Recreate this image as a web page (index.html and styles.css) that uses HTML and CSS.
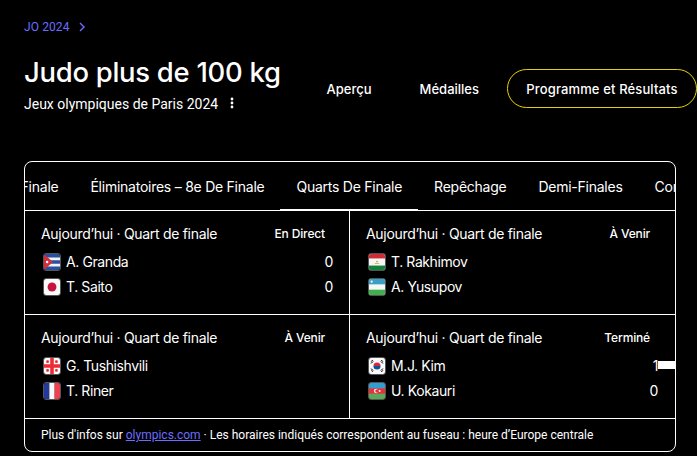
FILE: index.html
```html
<!DOCTYPE html>
<html lang="fr">
<head>
<meta charset="utf-8">
<title>Judo plus de 100 kg</title>
<link rel="stylesheet" href="styles.css">
</head>
<body>
<header class="head">
  <div class="head-left">
    <nav class="crumb"><a class="crumb-link">JO 2024</a>
      <svg class="crumb-chev" width="8" height="10" viewBox="0 0 8 10"><path d="M2 1l4 4-4 4" fill="none" stroke="#6c6cff" stroke-width="1.4"/></svg>
    </nav>
    <h1 class="title">Judo plus de 100 kg</h1>
    <div class="sub"><span>Jeux olympiques de Paris 2024</span>
      <svg class="dots" width="4" height="12" viewBox="0 0 4 12"><circle cx="2" cy="2" r="1.4"/><circle cx="2" cy="6" r="1.4"/><circle cx="2" cy="10" r="1.4"/></svg>
    </div>
  </div>
  <nav class="views">
    <a class="view">Aperçu</a>
    <a class="view">Médailles</a>
    <a class="view view-on">Programme et Résultats</a>
  </nav>
</header>

<section class="card">
  <div class="tabs">
    <a class="tab tab-first">Demi Finale</a>
    <a class="tab">Éliminatoires – 8e De Finale</a>
    <a class="tab tab-on">Quarts De Finale</a>
    <a class="tab">Repêchage</a>
    <a class="tab">Demi-Finales</a>
    <a class="tab">Combats</a>
  </div>
  <div class="grid">
    <article class="match">
      <div class="match-head"><span>Aujourd’hui · Quart de finale</span><span class="status">En Direct</span></div>
      <div class="row"><svg class="flag" viewBox="0 0 18 18"><rect width="18" height="18" fill="#2a4f9e"/><path d="M0 4h18v3H0zM0 11h18v3H0z" fill="#f2f2f2"/><path d="M0 0l10 9-10 9z" fill="#cf2e3c"/><circle cx="3.5" cy="9" r="1.4" fill="#fff"/></svg><span class="name">A. Granda</span><span class="score">0</span></div>
      <div class="row"><svg class="flag" viewBox="0 0 18 18"><rect width="18" height="18" fill="#fafafa"/><circle cx="9" cy="9" r="5" fill="#c8143c"/></svg><span class="name">T. Saito</span><span class="score">0</span></div>
    </article>
    <article class="match">
      <div class="match-head"><span>Aujourd’hui · Quart de finale</span><span class="status">À Venir</span></div>
      <div class="row"><svg class="flag" viewBox="0 0 18 18"><rect width="18" height="18" fill="#f6f6f6"/><rect width="18" height="5" fill="#cf2a35"/><rect y="13" width="18" height="5" fill="#14803c"/><path d="M6 10h6l-1 1H7z" fill="#c9a83c"/><circle cx="9" cy="8.5" r="1" fill="#c9a83c"/></svg><span class="name">T. Rakhimov</span></div>
      <div class="row"><svg class="flag" viewBox="0 0 18 18"><rect width="18" height="18" fill="#f6f6f6"/><rect width="18" height="6" fill="#3a9fc4"/><rect y="12" width="18" height="6" fill="#3fb04f"/><circle cx="3" cy="3" r="1.3" fill="#dff"/></svg><span class="name">A. Yusupov</span></div>
    </article>
    <article class="match">
      <div class="match-head"><span>Aujourd’hui · Quart de finale</span><span class="status">À Venir</span></div>
      <div class="row"><svg class="flag" viewBox="0 0 18 18"><rect width="18" height="18" fill="#fafafa"/><path d="M7 0h4v18H7zM0 7h18v4H0z" fill="#ee2a35"/><path d="M2.500 3h3v2h-3zM3 2.500h2v3H3zM12.500 3h3v2h-3zM13 2.500h2v3h-2zM2.500 13h3v2h-3zM3 12.500h2v3H3zM12.500 13h3v2h-3zM13 12.500h2v3h-2z" fill="#ee2a35"/></svg><span class="name">G. Tushishvili</span></div>
      <div class="row"><svg class="flag" viewBox="0 0 18 18"><rect width="6" height="18" fill="#23399c"/><rect x="6" width="6" height="18" fill="#f8f8f8"/><rect x="12" width="6" height="18" fill="#ef4050"/></svg><span class="name">T. Riner</span></div>
    </article>
    <article class="match">
      <div class="match-head"><span>Aujourd’hui · Quart de finale</span><span class="status">Terminé</span></div>
      <div class="row"><svg class="flag" viewBox="0 0 18 18"><rect width="18" height="18" fill="#fafafa"/><path d="M5 9a4 4 0 0 1 8 0z" fill="#cd2e3a"/><path d="M5 9a4 4 0 0 0 8 0z" fill="#0f4fa0"/><path d="M2 4l2.5-1.5M2 6l3-2M13.5 2.500l2.500 1.500M13 4l3 2M2 12l3 2M2.500 14l2 1.500M13 14l3-2M13.500 15.500l2.500-1.500" stroke="#333" stroke-width="1.100"/></svg><span class="name">M.J. Kim</span><span class="score score-mark">1</span></div>
      <div class="row"><svg class="flag" viewBox="0 0 18 18"><rect width="18" height="18" fill="#e8303c"/><rect width="18" height="6" fill="#2f9fd0"/><rect y="12" width="18" height="6" fill="#5aa85a"/><circle cx="8" cy="9" r="2.400" fill="#fff"/><circle cx="9" cy="9" r="2" fill="#e8303c"/><circle cx="12" cy="9" r="1" fill="#fff"/></svg><span class="name">U. Kokauri</span><span class="score">0</span></div>
    </article>
  </div>
  <footer class="foot">Plus d'infos sur <a class="foot-link">olympics.com</a> · Les horaires indiqués correspondent au fuseau : heure d’Europe centrale</footer>
</section>
</body>
</html>
```
FILE: styles.css
```css
* { box-sizing: border-box; }
html, body { margin: 0; height: 456px; overflow: hidden; background: #000; color: #fff; }
body { padding: 0 0 0 24px; font-family: "Inter", "Liberation Sans", sans-serif; }

.head { display: flex; justify-content: space-between; height: 161px; align-items: flex-start; }
.head-left { padding-top: 20px; }
.crumb { display: flex; align-items: center; gap: 8px; height: 14px; font-size: 12px; color: #6c6cff; font-family: "Roboto", sans-serif; letter-spacing: .1px; }
.crumb-chev { display: block; }
.title { margin: 20px 0 0; font-size: 27.4px; line-height: 36px; font-weight: 500; letter-spacing: -.25px; }
.sub { display: flex; align-items: center; gap: 12px; margin-top: 5px; font-size: 14px; line-height: 18px; font-family: "Roboto", sans-serif; }
.dots { fill: #fff; margin-top: -2px; }

.views { display: flex; align-items: center; margin-top: 69px; height: 39px; font-size: 13px; font-weight: 500; }
.view { padding: 0 24px; }
.view-on { display: flex; align-items: center; height: 39px; width: 190px; justify-content: center; padding: 0; margin-left: 4px; border: 1px solid #e6d200; border-radius: 20px; letter-spacing: .13px; }

.card { width: 652px; height: 291px; border: 1px solid #fff; border-radius: 8px; overflow: hidden; display: flex; flex-direction: column; }
.tabs { display: flex; height: 49px; flex: none; overflow: hidden; border-bottom: 1px solid #fff; font-size: 14px; letter-spacing: -.25px; white-space: nowrap; }
.tab { flex: none; display: flex; align-items: center; padding: 0 16px; height: 48px; }
.tab-first { margin-left: -57px; }
.tab-on { box-shadow: inset 0 -2px 0 #fff; height: 49px; }

.grid { display: grid; grid-template-columns: 325px 326px; grid-template-rows: 104px 104px; flex: none; }
.match { padding: 13px 26px 0 16px; border-bottom: 1px solid #fff; }
.match:nth-child(odd) { border-right: 1px solid #fff; padding-right: 24px; }
.match-head { display: flex; justify-content: space-between; align-items: center; height: 18px; margin-bottom: 7px; font-size: 14px; letter-spacing: -.3px; }
.status { font-size: 12px; font-weight: 500; letter-spacing: -.15px; }
.row { display: flex; align-items: center; gap: 5px; height: 25px; padding-left: 2px; margin-right: -8px; font-size: 14px; letter-spacing: -.4px; }
.flag { width: 18px; height: 18px; border-radius: 3px; border: 1px solid #555; flex: none; }
.name { flex: 1; }
.score { position: relative; }
.score-mark::after { content: ""; position: absolute; left: 100%; top: 4px; width: 24px; height: 8px; background: #fff; }

.foot { flex: 1; padding: 9px 16px 0; font-size: 12px; font-family: "Roboto", sans-serif; }
.foot-link { color: #6c6cff; text-decoration: underline; }
```
